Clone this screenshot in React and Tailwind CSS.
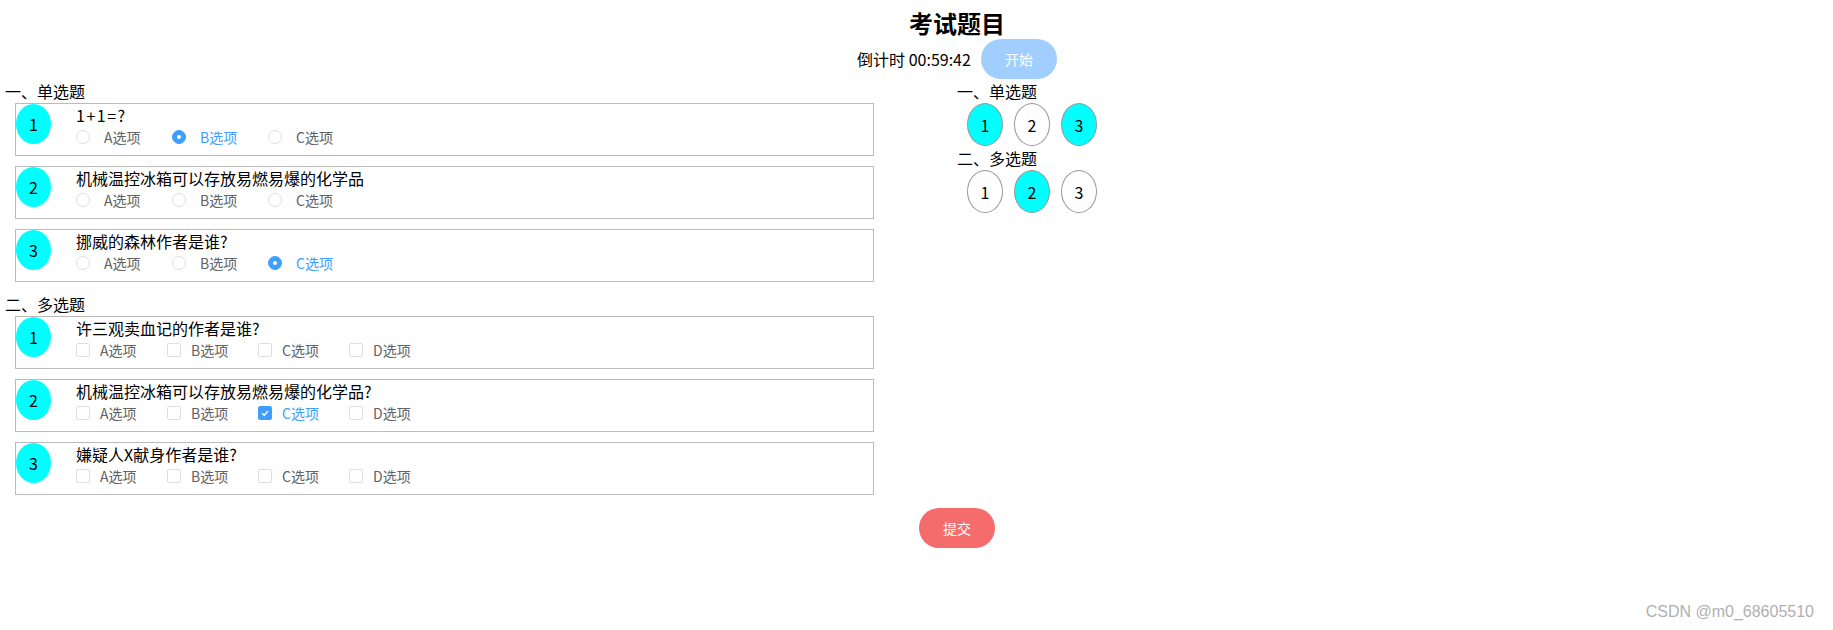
import React, { useState } from 'react'

const single = [
  { q: '1+1=?', answer: 'B', wide: true },
  { q: '机械温控冰箱可以存放易燃易爆的化学品', answer: null },
  { q: '挪威的森林作者是谁?', answer: 'C' },
]

const multi = [
  { q: '许三观卖血记的作者是谁?', answer: [] },
  { q: '机械温控冰箱可以存放易燃易爆的化学品?', answer: ['C'] },
  { q: '嫌疑人X献身作者是谁?', answer: [] },
]

const Radio = ({ label, checked }) => (
  <div className="flex items-center w-[96px] h-[22px]">
    <span
      className={`flex items-center justify-center w-[14px] h-[14px] rounded-full border ${
        checked ? 'bg-[#409eff] border-[#409eff]' : 'bg-white border-[#dcdfe6]'
      }`}
    >
      {checked && <span className="w-[4px] h-[4px] rounded-full bg-white" />}
    </span>
    <span className={`ml-[14px] text-[14px] ${checked ? 'text-[#409eff]' : 'text-[#606266]'}`}>{label}选项</span>
  </div>
)

const Checkbox = ({ label, checked }) => (
  <div className="flex items-center w-[91px] h-[22px]">
    <span
      className={`flex items-center justify-center w-[14px] h-[14px] rounded-[2px] border ${
        checked ? 'bg-[#409eff] border-[#409eff]' : 'bg-white border-[#dcdfe6]'
      }`}
    >
      {checked && (
        <svg width="10" height="10" viewBox="0 0 10 10" fill="none">
          <path d="M2 5.2 L4.2 7.3 L8 3" stroke="white" strokeWidth="1.3" />
        </svg>
      )}
    </span>
    <span className={`ml-[10px] text-[14px] ${checked ? 'text-[#409eff]' : 'text-[#606266]'}`}>{label}选项</span>
  </div>
)

const Card = ({ num, children, q, wide }) => (
  <div className="ml-[10px] w-[859px] h-[53px] border border-[#bbbbbb] mb-[10px] flex">
    <div className="w-[35px] h-[40px] rounded-[50%] bg-[#00ffff] flex items-center justify-center text-[16px] shrink-0">
      {num}
    </div>
    <div className="ml-[25px]">
      <div className={`text-[16px] leading-[22px] text-black ${wide ? 'tracking-[1.5px]' : ''}`}>{q}</div>
      <div className="flex">{children}</div>
    </div>
  </div>
)

const Bubble = ({ n, done }) => (
  <div
    className={`w-[36px] h-[43px] rounded-[50%] border border-[#999999] flex items-center justify-center text-[16px] ${
      done ? 'bg-[#00ffff]' : 'bg-white'
    }`}
  >
    {n}
  </div>
)

export default function App() {
  const [time] = useState('00:59:42')

  return (
    <div
      className="relative min-h-[630px] bg-white text-black"
      style={{ fontFamily: '"Noto Sans CJK SC", "Noto Sans", sans-serif' }}
    >
      {/* header */}
      <div className="flex flex-col items-center pl-[81px] pt-[7px]">
        <h1 className="text-[24px] leading-[32px] font-bold">考试题目</h1>
        <div className="flex items-center h-[40px]">
          <span className="text-[16px]">倒计时 {time}</span>
          <button className="ml-[10px] w-[76px] h-[40px] rounded-full bg-[#a0cfff] text-white text-[14px]">
            开始
          </button>
        </div>
      </div>

      <div className="flex">
        {/* questions */}
        <div className="w-[957px] pl-[5px]">
          <div className="text-[16px] leading-[24px]">一、单选题</div>
          {single.map((item, i) => (
            <Card key={i} num={i + 1} q={item.q} wide={item.wide}>
              {['A', 'B', 'C'].map((o) => (
                <Radio key={o} label={o} checked={item.answer === o} />
              ))}
            </Card>
          ))}
          <div className="text-[16px] leading-[24px]">二、多选题</div>
          {multi.map((item, i) => (
            <Card key={i} num={i + 1} q={item.q}>
              {['A', 'B', 'C', 'D'].map((o) => (
                <Checkbox key={o} label={o} checked={item.answer.includes(o)} />
              ))}
            </Card>
          ))}
        </div>

        {/* answer sheet */}
        <div>
          <div className="text-[16px] leading-[24px]">一、单选题</div>
          <div className="flex gap-[11px] ml-[10px]">
            <Bubble n={1} done />
            <Bubble n={2} />
            <Bubble n={3} done />
          </div>
          <div className="text-[16px] leading-[24px]">二、多选题</div>
          <div className="flex gap-[11px] ml-[10px]">
            <Bubble n={1} />
            <Bubble n={2} done />
            <Bubble n={3} />
          </div>
        </div>
      </div>

      <div className="flex justify-center pl-[81px] mt-[3px]">
        <button className="w-[76px] h-[40px] rounded-full bg-[#f56c6c] text-white text-[14px]">提交</button>
      </div>

      <div
        className="absolute right-[19px] top-[600px] text-[16px] text-[#b0b0b0]"
        style={{ fontFamily: '"Liberation Sans", Arial, sans-serif' }}
      >
        CSDN @m0_68605510
      </div>
    </div>
  )
}
